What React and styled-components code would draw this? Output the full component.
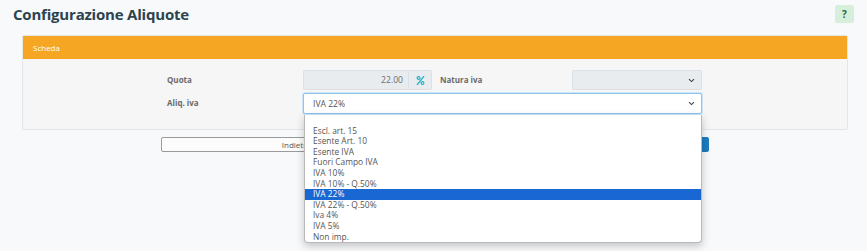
import React from "react";
import styled, { createGlobalStyle } from "styled-components";
import { FaPercent } from "react-icons/fa";

const GlobalStyle = createGlobalStyle`
  html, body {
    margin: 0;
    padding: 0;
    background: #f8f9fb;
  }
  body {
    font-family: "Open Sans", "Liberation Sans", sans-serif;
  }
`;

const Page = styled.div`
  width: 867px;
  height: 251px;
  padding: 0 13px;
  box-sizing: border-box;
  overflow: hidden;
`;

const Header = styled.div`
  display: flex;
  align-items: center;
  justify-content: space-between;
  height: 28px;
`;

const Title = styled.h1`
  margin: 0;
  font-size: 15px;
  font-weight: 700;
  color: #2b4450;
  letter-spacing: -0.2px;
`;

const HelpButton = styled.div`
  width: 19px;
  height: 18px;
  border-radius: 2px;
  background: #d6efdb;
  color: #2f5f3a;
  font-size: 10px;
  font-weight: 700;
  display: flex;
  align-items: center;
  justify-content: center;
`;

const Card = styled.div`
  margin: 7px 6px 0 9px;
  border: 1px solid #e4e5e7;
  border-radius: 2px;
  background: #f6f6f6;
`;

const CardHeader = styled.div`
  height: 23px;
  background: #f5a623;
  color: #fff;
  font-size: 8px;
  display: flex;
  align-items: center;
  padding-left: 10px;
`;

const CardBody = styled.div`
  padding: 11px 0 15px 144px;
  display: grid;
  grid-template-columns: 136px 135px 134px 130px;
  row-gap: 3px;
  align-items: center;
`;

const Label = styled.div`
  font-size: 8px;
  font-weight: 700;
  color: #6a6a6a;
  padding-left: ${(p) => (p.$inset ? "2px" : "0")};
  padding-bottom: ${(p) => (p.$up ? "2px" : "0")};
`;

const InputGroup = styled.div`
  display: flex;
  width: 129px;
  height: 20px;
`;

const ReadonlyInput = styled.div`
  flex: 1;
  background: #e9ecef;
  border: 1px solid #dcdfe3;
  border-right: none;
  border-radius: 2px 0 0 2px;
  font-size: 8.6px;
  color: #6c6c6c;
  display: flex;
  align-items: center;
  justify-content: flex-end;
  padding-right: 5px;
`;

const Addon = styled.div`
  width: 22px;
  background: #e9ecef;
  border: 1px solid #dcdfe3;
  border-radius: 0 2px 2px 0;
  display: flex;
  align-items: center;
  justify-content: center;
  color: #1fb3c8;
  font-size: 9px;
`;

const SelectWrap = styled.div`
  position: relative;
  grid-column: ${(p) => p.$span || "auto"};
`;

const SelectBox = styled.div`
  height: ${(p) => (p.$focus ? "21px" : "20px")};
  box-sizing: border-box;
  border: 1px solid ${(p) => (p.$focus ? "#8dc3ef" : "#dcdfe3")};
  box-shadow: ${(p) => (p.$focus ? "0 0 0 1px #cfe6fa" : "none")};
  border-radius: 2px;
  background: ${(p) => (p.$disabled ? "#e9ecef" : "#fff")};
  display: flex;
  align-items: center;
  justify-content: space-between;
  padding: 0 6px 0 9px;
  font-size: 8.6px;
  color: #555;
`;

const Dropdown = styled.ul`
  position: absolute;
  top: 100%;
  left: 1px;
  width: 398px;
  margin: 1px 0 0;
  padding: 0;
  list-style: none;
  background: #fff;
  border: 1px solid #b9b9b9;
  border-top: none;
  border-radius: 0 0 4px 4px;
  box-shadow: 0 3px 8px rgba(0, 0, 0, 0.22);
  z-index: 10;
  box-sizing: border-box;
  overflow: hidden;
`;

const Option = styled.li`
  height: 10.6px;
  line-height: 10.6px;
  padding-left: 8px;
  font-size: 8.4px;
  color: ${(p) => (p.$active ? "#fff" : "#555")};
  background: ${(p) => (p.$active ? "#1967d2" : "transparent")};
  white-space: nowrap;
`;

const Actions = styled.div`
  margin: 7px 0 0 148px;
  display: grid;
  grid-template-columns: 271px 271px;
  column-gap: 6px;
`;

const Button = styled.div`
  height: 15px;
  box-sizing: border-box;
  border-radius: 2px;
  font-size: 8px;
  display: flex;
  align-items: center;
  justify-content: center;
  border: 1px solid ${(p) => (p.$primary ? "#1c7cc0" : "#9a9a9a")};
  background: ${(p) => (p.$primary ? "#1c7cc0" : "#fcfcfc")};
  color: ${(p) => (p.$primary ? "#fff" : "#555")};
`;

const Chevron = () => (
  <svg width="7" height="5" viewBox="0 0 7 5">
    <path d="M1 1.2 L3.5 3.6 L6 1.2" fill="none" stroke="#444" strokeWidth="1.1" />
  </svg>
);

const options = [
  "",
  "Escl. art. 15",
  "Esente Art. 10",
  "Esente IVA",
  "Fuori Campo IVA",
  "IVA 10%",
  "IVA 10% - Q.50%",
  "IVA 22%",
  "IVA 22% - Q.50%",
  "Iva 4%",
  "IVA 5%",
  "Non imp.",
];

export default function App() {
  const selected = "IVA 22%";
  return (
    <>
      <GlobalStyle />
      <Page>
        <Header>
          <Title>Configurazione Aliquote</Title>
          <HelpButton>?</HelpButton>
        </Header>
        <Card>
          <CardHeader>Scheda</CardHeader>
          <CardBody>
            <Label $up>Quota</Label>
            <InputGroup>
              <ReadonlyInput>22.00</ReadonlyInput>
              <Addon>
                <FaPercent />
              </Addon>
            </InputGroup>
            <Label $inset $up>Natura iva</Label>
            <SelectWrap>
              <SelectBox $disabled>
                <span />
                <Chevron />
              </SelectBox>
            </SelectWrap>
            <Label $up>Aliq. iva</Label>
            <SelectWrap $span="2 / span 3">
              <SelectBox $focus>
                <span>{selected}</span>
                <Chevron />
              </SelectBox>
              <Dropdown>
                {options.map((o, i) => (
                  <Option key={i} $active={o === selected}>
                    {o}
                  </Option>
                ))}
              </Dropdown>
            </SelectWrap>
          </CardBody>
        </Card>
        <Actions>
          <Button>Indietro</Button>
          <Button $primary>Salva</Button>
        </Actions>
      </Page>
    </>
  );
}
